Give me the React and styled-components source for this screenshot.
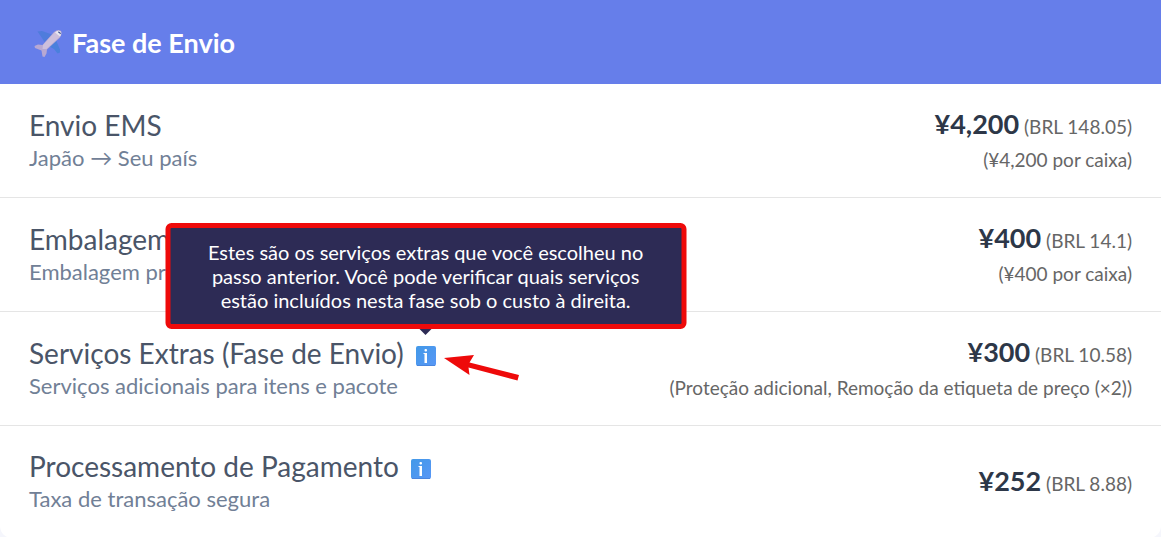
import styled, { createGlobalStyle } from "styled-components";

const costs = [
	{
		id: "ems",
		name: "Envio EMS",
		description: "Japão → Seu país",
		price: "¥4,200",
		converted: "(BRL 148.05)",
		detail: "(¥4,200 por caixa)",
	},
	{
		id: "packaging",
		name: "Embalagem",
		description: "Embalagem própria",
		price: "¥400",
		converted: "(BRL 14.1)",
		detail: "(¥400 por caixa)",
	},
	{
		id: "extras",
		name: "Serviços Extras (Fase de Envio)",
		description: "Serviços adicionais para itens e pacote",
		price: "¥300",
		converted: "(BRL 10.58)",
		detail: "(Proteção adicional, Remoção da etiqueta de preço (×2))",
		info: true,
		tooltip:
			"Estes são os serviços extras que você escolheu no passo anterior. Você pode verificar quais serviços estão incluídos nesta fase sob o custo à direita.",
	},
	{
		id: "payment",
		name: "Processamento de Pagamento",
		description: "Taxa de transação segura",
		price: "¥252",
		converted: "(BRL 8.88)",
		info: true,
	},
];

export default function App() {
	return (
		<>
			<GlobalStyle />
			<Card>
				<Header>
					<PlaneIcon />
					<h2>Fase de Envio</h2>
				</Header>
				{costs.map((e) => (
					<CostRow key={e.id} {...e} />
				))}
			</Card>
		</>
	);
}

function CostRow({ id, name, description, price, converted, detail, info, tooltip }) {
	return (
		<Row>
			<Service>
				<Name>
					{name}
					{info && (
						<InfoButton
							type="button"
							aria-label={`Informações: ${name}`}
							aria-describedby={tooltip ? `${id}-tip` : undefined}
						>
							<InfoIcon />
							{tooltip && (
								<>
									<Tooltip id={`${id}-tip`} role="tooltip">
										{tooltip}
									</Tooltip>
									<PointerArrow />
								</>
							)}
						</InfoButton>
					)}
				</Name>
				<Description>{description}</Description>
			</Service>
			<Cost>
				<Price>
					<strong>{price}</strong> {converted}
				</Price>
				{detail && <Detail>{detail}</Detail>}
			</Cost>
		</Row>
	);
}

function PlaneIcon() {
	return (
		<svg width="28" height="28" viewBox="0 0 28 28" aria-hidden="true">
			<path d="M3.500 2.500 L8 2 18 5.500 10.500 13 8 9Z" fill="#4f7cdc" />
			<path d="M21.500 10 L26 20.500 26 23.500 23.500 24.500 20 20 14.500 17Z" fill="#4a80dc" />
			<path d="M0.500 17 L4 15.500 8.500 16 20 3 Q24 -0.500 27 2 Q28.500 4.500 26 8.500 L13 20.500 12.500 24.500 10.500 28 8.500 27.500 7.500 21.500 1 19Z" fill="#b7a8d3" />
			<path d="M9 16 L20.500 3.500 Q24 0.500 26.500 2.500 Q28 4.500 25.500 8 L12.500 20 8.500 20Z" fill="#cdbfdc" />
			<path d="M21 3.500 Q24 0.500 26.500 2.500 Q28 4.500 26 7.500Z" fill="#e9e8f0" />
			<path d="M24 3 Q26 3 26.500 5" fill="none" stroke="#4b5b94" strokeWidth="1.200" />
		</svg>
	);
}

function InfoIcon() {
	return (
		<svg width="20" height="20" viewBox="0 0 20 20" aria-hidden="true">
			<defs>
				<linearGradient id="infoBlue" x1="0" y1="0" x2="1" y2="1">
					<stop offset="0" stopColor="#4299e8" />
					<stop offset="1" stopColor="#5897f6" />
				</linearGradient>
			</defs>
			<rect width="20" height="20" rx="2" fill="url(#infoBlue)" />
			<path d="M1 19.500 H19" stroke="#4a86de" strokeWidth="1" />
			<rect x="8.500" y="3" width="2.500" height="2.500" rx="1" fill="#fff" />
			<path d="M7.500 7.500H10" stroke="#fff" strokeWidth="1" />
			<rect x="8.500" y="7" width="2.500" height="10" fill="#fff" />
		</svg>
	);
}

function PointerArrow() {
	return (
		<Arrow width="77" height="28" viewBox="0 0 77 28" aria-hidden="true">
			<path d="M1 3 31 0 26.500 7.500 76 20 74.500 25.500 25.500 12.500 26.500 20Z" fill="#ee0a0a" />
		</Arrow>
	);
}

const GlobalStyle = createGlobalStyle`
	* {
		box-sizing: border-box;
	}
	body {
		margin: 0;
		background-color: #f5f6fc;
		font-family: "Lato", sans-serif;
	}
	h2,
	h3,
	p {
		margin: 0;
	}
`;
const Card = styled.section`
	background-color: #fff;
	border-radius: 0 0 12px 12px;
`;
const Header = styled.header`
	display: flex;
	align-items: center;
	gap: 10px;
	height: 84px;
	padding: 2px 34px 0;
	background-color: #667eea;
	color: #fff;
	h2 {
		font-size: 27px;
		line-height: 36px;
		font-weight: 700;
	}
`;
const Row = styled.div`
	display: flex;
	justify-content: space-between;
	align-items: center;
	gap: 24px;
	min-height: 114px;
	padding: 0 29px;
	border-bottom: 1px solid #e5e5e5;
	&:last-child {
		min-height: 112px;
		border-bottom: none;
	}
`;
const Service = styled.div`
	color: #4a5568;
`;
const Name = styled.h3`
	display: flex;
	align-items: center;
	gap: 12px;
	font-size: 28px;
	line-height: 34px;
	font-weight: 400;
`;
const Description = styled.p`
	color: #718096;
	font-size: 22px;
	line-height: 32px;
`;
const InfoButton = styled.button`
	position: relative;
	width: 20px;
	height: 20px;
	margin-top: 6px;
	padding: 0;
	border: none;
	background: none;
	font: inherit;
	cursor: pointer;
	svg {
		display: block;
	}
`;
const Tooltip = styled.span`
	position: absolute;
	z-index: 1;
	bottom: 37px;
	left: 50%;
	width: 521px;
	padding: 12px 36px;
	transform: translateX(-50%);
	border: 5px solid #ee0a0a;
	border-radius: 6px;
	background-color: #2d2b55;
	color: #fff;
	font-size: 20px;
	line-height: 24px;
	text-align: center;
	&::after {
		content: "";
		position: absolute;
		top: calc(100% + 5px);
		left: 50%;
		transform: translateX(-50%);
		border: 6px solid transparent;
		border-top-color: #2d2b55;
		border-bottom: none;
	}
`;
const Arrow = styled.svg`
	position: absolute;
	top: 9px;
	left: 27px;
`;
const Cost = styled.div`
	color: #666;
	text-align: right;
`;
const Price = styled.p`
	font-size: 19px;
	line-height: 36px;
	strong {
		color: #2d3748;
		font-size: 27px;
		font-weight: 700;
	}
`;
const Detail = styled.p`
	font-size: 19px;
	line-height: 30px;
`;
